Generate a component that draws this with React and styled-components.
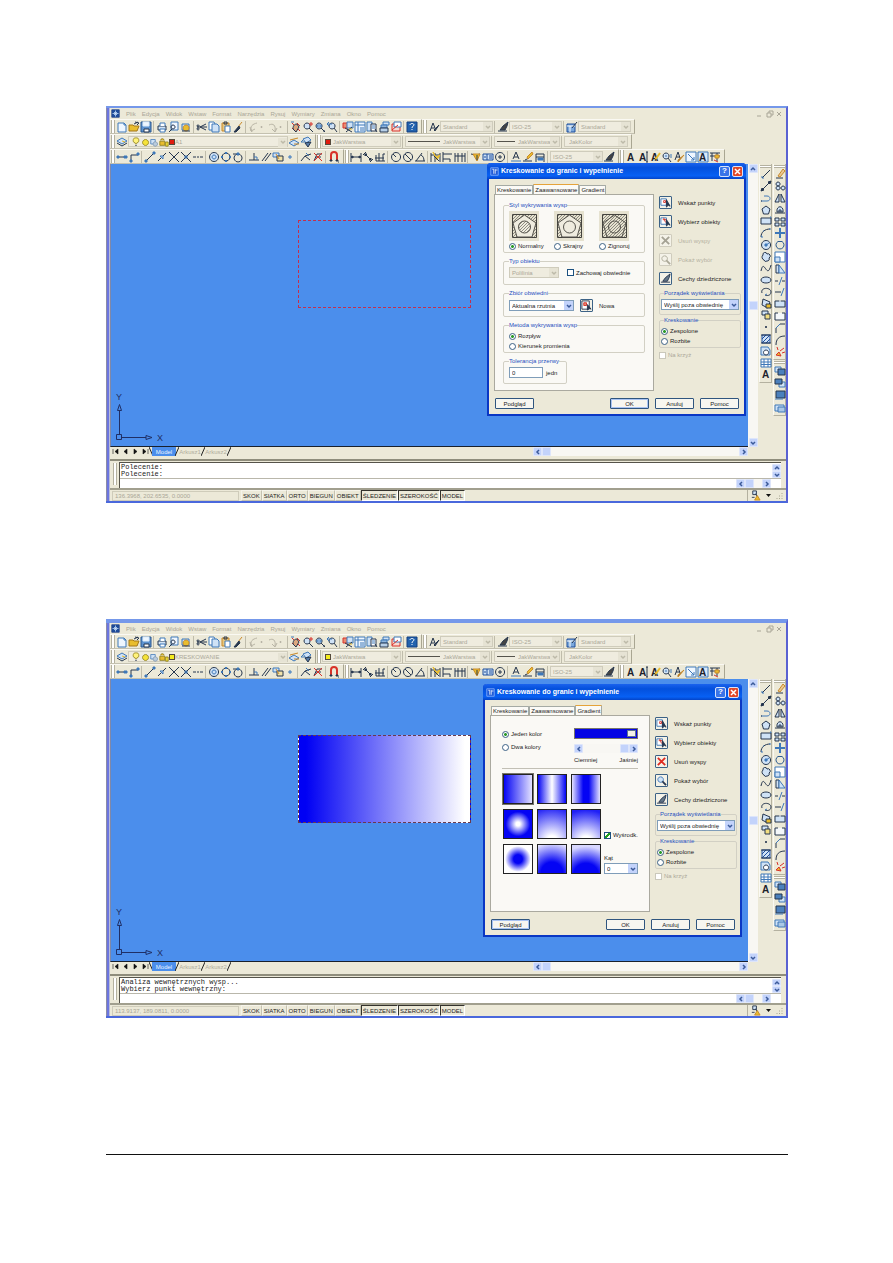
import { useId, useState } from "react";
import styled, { createGlobalStyle } from "styled-components";

const GlobalStyle = createGlobalStyle`
  * { box-sizing: border-box; }
  body { margin: 0; background: #fff; }
  body, button, input, select {
    font-family: "Liberation Sans", Arial, sans-serif;
    font-size: 6px;
    line-height: 8px;
    color: #1c1c1c;
  }
  button, input, select { margin: 0; padding: 0; border: 0; background: none; }
  svg { display: block; flex: none; }
`

/* ---------- icons ---------- */
const N = '#26364e'
const B = '#3f78b8'
const L = '#cfe2f6'
const Y = '#e9bd2e'
const R = '#d8322a'
const G = '#b9b5a6'
const O = '#c98a2b'

// every glyph is a list of [path, stroke, fill]; a string entry is a letter
const glyphs = {
  app: [['M1 1h10v10H1z', '#1d3f86', '#1f4e9c'], ['M6 2v8M2 6h8M4 4l4 4M8 4l-4 4', '#cfe6ff']],
  new: [['M2 2h6l2 2v7H2z', B, '#eef6ff'], ['M8 2v2h2', B]],
  open: [['M1 4h4l1 1h5l-2 5H1z', '#a5781a', Y], ['M6 3l4-2M7 1l4 1-2 2', N]],
  save: [['M1 1h10v10H1z', '#28568f', '#5d92cf'], ['M3 1h6v4H3z', '#dcebfa', '#eef6ff'], ['M4 8h5v3H4z', N, '#fff']],
  print: [['M2 5h8v4H2z', N, L], ['M4 5V2h5v3M4 8h5v3H4z', B, '#fff']],
  preview: [['M3 1h7v8H3z', B, '#eef6ff'], ['M5 4a2 2 0 1 0 .1 0M4 8l-3 3', N]],
  publish: [['M2 3h7v6H2z', B, L], ['M6 4a3 3 0 1 0 .1 0', O, Y], ['M2 10h8', N]],
  cut: [['M1 6h10M4 6l6-3M4 6l6 3', N], ['M2 4a1 1 0 1 0 .1 0M2 7a1 1 0 1 0 .1 0', N]],
  copy: [['M1 1h5l1 2v6H1z', B, '#fff'], ['M4 3h5l2 2v6H4z', B, L]],
  paste: [['M2 2h7v8H2z', O, '#e6c680'], ['M5 5h5v6H5z', B, '#fff'], ['M4 1h3v2H4z', N]],
  brush: [['M10 1L6 6', O], ['M7 5l-5 6 2 0 4-4z', N, N]],
  undo: [['M4 11C1 5 5 3 9 2M4 11C3 10 3 9 3 8', G], ['M2 6l1 4 4-2', G]],
  redo: [['M2 4c4-2 7 0 6 6', G], ['M5 8l3 3 2-4', G]],
  dot: [['M3 5.500h1v1h-1z', G, G]],
  pan: [['M2 2l8 8M7 2l3 3M2 7l3 3', R], ['M3 8c0-4 2-5 4-5l2 3-3 5z', N, '#dca77e'], ['M1 1h3', B]],
  zoom: [['M5 2a3 3 0 1 0 .1 0M7 7l4 4', N, L], ['M9 1v4M7 3h4', R]],
  zoomwin: [['M5 2a3 3 0 1 0 .1 0M7 7l4 4', N, L], ['M3 4h4v2H3z', B], ['M9 10h2', N]],
  zoomprev: [['M6 2a3 3 0 1 0 .1 0M8 7l3 4', N, L], ['M1 3h5M1 3l2-2M1 3l2 2', B]],
  props: [['M1 2h5v5H1z', R, '#e98b70'], ['M5 1h6v6H5z', B, L], ['M3 7l7 4M10 6l-6 5', N], ['M7 8h3', Y]],
  center: [['M1 1h10v10H1z', B, '#eef6ff'], ['M4 1v10M1 4h10M6 7h4M6 9h4', B]],
  palettes: [['M1 1h5v9H1z', B, L], ['M5 3h5v7H5z', N, '#fff'], ['M6 5h3M6 7h3', B], ['M9 8l2 3', N]],
  sheet: [['M5 1h6v3H5z', B, L], ['M3 4h6v3H3z', B, '#8fb4dc'], ['M2 7h8v4H2z', N, '#b7cfe8']],
  markup: [['M2 3h8v7H2z', R, '#f7dad2'], ['M4 1h7v5H4z', B, '#fff'], ['M2 9l6-5', R]],
  help: [['M1 1h10v10H1z', '#123f80', '#2262ae'], ['M4 4c0-2 4-2 4 0 0 1-2 1-2 3M6 8v1', '#fff']],
  textstyle: [['M2 10l3-8 2 5M3 7h4', N], ['M11 4L6 9l1 1z', N, '#555']],
  dimstyle: [['M1 10h9', N], ['M11 1L6 5l-3 4 5 0 2-4z', N, '#444']],
  tablestyle: [['M1 3h8v8H1z', '#1f4e9c', '#7ba8dc'], ['M1 5h8M4 5v6', '#fff'], ['M11 1L6 7', N]],
  layers: [['M1 5l5-3 5 3-5 3z', B, L], ['M1 7l5 3 5-3', N], ['M6 5l3 1', Y]],
  bulb: [['M6 1a3 3 0 0 1 1 6v1H5V7a3 3 0 0 1 1-6', '#9b8b2a', '#fff37a'], ['M5 10h2', N]],
  sun: [['M6 2a4 4 0 1 0 .1 0', '#8b7b18', '#f5e23a']],
  freeze: [['M1 2h6v6H1z', B, L], ['M7 5a3 3 0 1 0 .1 0', '#7c94ae', '#b9cbdc']],
  lock: [['M2 4a2 2 0 1 1 4 0M1 5h6v5H1z', '#8b7b18', Y], ['M8 6h3v5H8z', '#8b7b18', '#f5e23a']],
  laymatch: [['M1 7l5-3 5 3-5 3z', B, L], ['M2 4l8-2M6 8h5', O]],
  layprev: [['M3 3l5-2 3 3-5 3z', B, L], ['M5 7l6-1-3 5z', N, '#567ba8'], ['M1 6h4M1 6l2-2', B]],
  track: [['M1 6h9', N], ['M1 5h2v2H1zM8 5h3v2H8z', B, B]],
  from: [['M3 11V4h7', N], ['M2 9h2v2H2zM9 2h2v2H9z', B, B]],
  endpoint: [['M2 10l8-8', N], ['M1 9h2v2H1zM9 1h2v2H9z', B, B]],
  midpoint: [['M2 10l8-8', N], ['M4 5h3v3z', B, L]],
  intersect: [['M1 1l10 10M11 1L1 11', N]],
  appint: [['M1 1l10 10M11 1L1 11', N], ['M5 5h2v2H5z', B]],
  ext: [['M1 6h3M5 6h2M8 6h3', N]],
  center2: [['M6 1.500a4.500 4.500 0 1 0 .1 0', N, L], ['M6 4a2 2 0 1 0 .1 0', B]],
  quadrant: [['M6 2a4 4 0 1 0 .1 0', N], ['M6 1l1 1-1 1-1-1zM6 9l1 1-1 1-1-1zM2 5l1 1-1 1-1-1zM10 5l1 1-1 1-1-1z', B, B]],
  tangent: [['M6 3a4 4 0 1 0 .1 0', N], ['M1 3h5', N], ['M5 2h2v2H5z', B, B]],
  perp: [['M6 2v7M1 9h10', N], ['M6 6h3v3', B]],
  parallel: [['M2 10l6-8M5 10l6-8', N]],
  insert: [['M1 2h6v4H1z', B, L], ['M5 5h6v5H5z', N, '#f2e3a8'], ['M4 3l3 5', O]],
  node: [['M5 5h2v2H5z', B, L]],
  nearest: [['M1 10l4-5 6-2M5 5l5 4', N], ['M6 2l3 3', B]],
  none: [['M2 10l3-7 5 0M4 6h5', N], ['M2 2l8 8M10 2L2 10', R]],
  osnap: [['M3 9V4a3 3 0 0 1 6 0v5', R, null, 2], ['M2 9h2v1H2zM8 9h2v1H8z', N, N], ['M10 11h1', N]],
  dimlin: [['M1 2v9M11 2v9M1 6h10', N], ['M1 6l2-1v2zM11 6L9 5v2z', N, N]],
  dimali: [['M1 4l3-3M8 11l3-3M3 3l6 6', N], ['M3 3l0 2 2-2zM9 9l0-2-2 2z', N, N]],
  dimord: [['M2 10h9M2 10V4M5 10V2M9 10V3M9 3h2M1 7h9', N]],
  dimrad: [['M6 1.500a4.500 4.500 0 1 0 .1 0', N], ['M6 6L3 3', N]],
  dimdia: [['M6 1.500a4.500 4.500 0 1 0 .1 0M3 3l6 6', N]],
  dimang: [['M1 10h10M2 10l6-8M7 4c2 1 3 3 3 6', N]],
  qdim: [['M1 2v9M5 2v9M10 2v9M1 4h9', N], ['M3 1l3 5 4-2-3 5z', Y, Y], ['M4 5l5 5', N]],
  dimbase: [['M1 1v10M1 3h9M1 8h7M8 8v3', N]],
  dimcont: [['M1 2v9M4 2v9M8 2v9M11 2v9M1 5h10', N]],
  leader: [['M1 3l5 1 4-1', N], ['M3 3l4 7 3-7z', O, Y], ['M7 4v5', N]],
  tol: [['M1 3h10v6H1z', '#1f4e9c', L], ['M5 3v6M7 5h3M3 5v2M7 7h3', '#1f4e9c']],
  cmark: [['M6 1.500a4.500 4.500 0 1 0 .1 0', N], ['M6 4v4M4 6h4', N]],
  dimedit: [['M1 10h10', B], ['M3 8l3-7 3 7M4 6h4', N]],
  dimtedit: [['M1 10h9M3 9l4-2', N], ['M10 1L5 6l1 2 5-5z', O, Y]],
  dimupd: [['M2 3v8M10 3v8M2 6h8M2 3h8', N], ['M4 7h5v2H4z', B, B]],
  mtext: ['A'],
  dtext: ['A', ['M10 1v10M9 1h2M9 11h2', N]],
  tedit: ['A', ['M11 2L6 9', Y, null, 2], ['M6 10l1-2', N]],
  find: [['M5 2a3 3 0 1 0 .1 0M7 7l3 4', N, L], ['M4 5h2M9 4h2M9 6h2', B]],
  tstyle: [['M2 9l3-8 2 6M3 6h4', N], ['M11 4L5 9l0 2z', O, '#8a6534']],
  tscale: [['M1 1h10v10H1z', B, '#eef6ff'], ['M3 3l6 6M9 6v3H6', B]],
  tjust: [['M1 1h10v10H1z', B, '#dbe9f8'], 'A'],
  tspace: [['M1 2h10M1 5h10M3 2v8M8 2v8', N], ['M6 4h4v3H6z', O, Y], ['M5 9l4 2', R]],
  line: [['M2 10l8-8', N], ['M1 9h2v2', B]],
  xline: [['M1 11L11 1', N], ['M1 11l3-1-2-2zM11 1L8 2l2 2z', N, N]],
  pline: [['M1 9h6c4 0 4-5 0-5H4', B], ['M1 9h1', N]],
  polygon: [['M6 2l4 3-1.500 5h-5L2 5z', N, L]],
  rect: [['M1 3h10v6H1z', N, L], ['M10 2h1v1', B]],
  arc: [['M1 10c0-5 4-8 9-8', N], ['M1 9h1v2M3 4h1M9 2h2', B]],
  circle: [['M6 1.500a4.500 4.500 0 1 0 .1 0', N, L], ['M6 6l3-2', B], ['M5 5h2v2H5z', B, B]],
  cloud: [['M3 4a2 2 0 0 1 4-1 2 2 0 0 1 2 4 2 2 0 0 1-2 3 2 2 0 0 1-3-1 3 3 0 0 1-1-5', N, L]],
  spline: [['M1 9c3-14 6 10 10-6', N]],
  ellipse: [['M1 6c0-4 10-4 10 0s-10 4-10 0', N, L]],
  earc: [['M2 7c-2-6 9-6 9-1 0 4-5 4-6 3', N], ['M5 9l2-1', B]],
  block: [['M3 1l7 3-2 6-6-3z', N, L], ['M6 6h5v4H6z', N, Y]],
  mkblock: [['M2 2h6v4H2z', N, L], ['M5 5h5v5H5z', N, '#f2de81']],
  point: [['M5.500 5.500h1v1h-1z', N, N]],
  hatch: [['M2 2h8v8H2zM2 6l4-4M2 10l8-8M6 10l4-4', '#1f4e9c', L], ['M1 2h10M1 10h10', N]],
  region: [['M1 2h7l2 3v5H1z', B, L], ['M6 5a2.500 2.500 0 1 0 .1 0', N, '#fff']],
  table: [['M1 2h10v8H1z', B, '#fff'], ['M1 5h10M1 7.500h10M4 2v8M8 2v8', B]],
  erase: [['M2 10h7', N], ['M4 8l5-7 2 2-5 6z', O, '#eac793']],
  copyobj: [['M4 2a2 2 0 1 0 .1 0M4 6a2 2 0 1 0 .1 0M9 6a2 2 0 1 0 .1 0', N, L]],
  mirror: [['M5 2v8H1zM7 2v8h4z', N, L]],
  offset: [['M1 9h10M3 8c-1-7 7-7 6 0z', N, L], ['M5 8V6h2v2', N]],
  array: [['M1 2h4v3H1zM7 2h4v3H7zM1 7h4v3H1zM7 7h4v3H7z', N, L]],
  move: [['M6 1v10M1 6h10', B, null, 2], ['M6 1l1 1H5zM6 11l1-1H5zM1 6l1 1V5zM11 6l-1 1V5z', B, B]],
  rotate: [['M4 2.500a4 4 0 1 0 4 0M4 2.500l4 0', '#2c5a8e']],
  scale: [['M1 1h10v10H1z', B, '#fff'], ['M1 6h5v5H1z', B, L]],
  stretch: [['M2 2h3v8H2z', N, L], ['M5 2l6 8H5z', B, L]],
  trim: [['M1 6h3M8 6h3', N], ['M8 2L5 10', B]],
  extend: [['M1 6h6', N], ['M10 2L7 10', B]],
  break1: [['M1 3h10v6H1z', N, L], ['M5 3h2', '#fff']],
  break2: [['M4 3H1v7h10V3H8', N, '#f4f7fa']],
  chamfer: [['M2 11V6l4-4h5', N], ['M2 6l4-4', B]],
  fillet: [['M2 11C2 5 5 2 11 2', N]],
  explode: [['M2 9l3-3 2 4z', R, Y], ['M6 5l4-3M8 7l3-1M4 4L3 1', R]],
  front: [['M1 2h6v5H1z', B, L], ['M4 4h7v6H4z', N, '#4b80bc']],
  back: [['M5 5h6v5H5z', B, L], ['M1 2h7v5H1z', N, '#4b80bc']],
  above: [['M2 2h9v7H2z', N, '#4b80bc'], ['M1 10h8', B]],
  under: [['M1 3h9v6H1z', B, L], ['M4 5h7v5H4z', B, '#a9c7e6']],
  pick: [['M1 2h6v7H1z', B, '#fff'], ['M4 4h2v2H4z', R], ['M7 3v8l2-2 2 1z', N, N]],
  pickobj: [['M1 2h6v7H1z', B, '#fff'], ['M4 2l2 5M3 4h4', R], ['M7 4v7l2-2 2 1z', N, N]],
  remove: [['M2 2l8 8M10 2l-8 8', '#e02b20', null, 2]],
  removeoff: [['M2 2l8 8M10 2l-8 8', '#a5a294', null, 2]],
  view: [['M5 2a3 3 0 1 0 .1 0', B, L], ['M7 7l4 4', N, null, 2]],
  viewoff: [['M5 2a3 3 0 1 0 .1 0', '#aba897'], ['M7 7l4 4', '#aba897', null, 2]],
  inherit: [['M1 10h10', N], ['M11 1L6 5 3 9l5 0 2-4z', N, '#66788a']],
  newset: [['M1 1h8v9H1z', N, '#fff'], ['M3 3h3v3H3z', R, '#e98b70'], ['M7 5v6l2-2 2 1z', N, N]],
  dialog: [['M1 1h10v10H1z', '#8fb7ff', '#1f5bd8'], ['M3 3h2v6M7 3v6M7 4h3', '#fff']],
  tray: [['M3 1h4v4H3zM6 4l3 5', N, L], ['M2 8h3', N], ['M8 6l3 5H5z', O, Y]]
}

function Icon({ name, size = 12 }) {
  return (
    <svg width={size} height={size} viewBox="0 0 12 12" aria-hidden="true">
      {glyphs[name].map((g, i) => typeof g === 'string'
        ? <text key={i} x="2" y="10" fontSize="10" fontWeight="700" fill="#1c222c">{g}</text>
        : <path key={i} d={g[0]} stroke={g[1]} fill={g[2] || 'none'} strokeWidth={g[3] || 1} />)}
    </svg>
  )
}

/* ---------- page and application window ---------- */
const Page = styled.main`
  padding: 106px 105px 60px 106px;
`
const AppWindow = styled.section`
  padding-left: 4px;
  margin-bottom: ${p => p.$after}px;
  border-top: ${p => p.$cap}px solid #7598ea;
  border-right: 2px solid #5a62d2;
  border-bottom: 2px solid #4a68dc;
  background: linear-gradient(to right, #8c8ca6 1px, #6c76e0 1px 3px, #b9bcd6 3px 4px, #ece9d8 4px);
`
const MenuBar = styled.nav`
  display: flex;
  align-items: center;
  gap: 6px;
  height: 11px;
  padding: 0 3px 0 1px;
`
const MenuItem = styled.button`
  color: #a9a697;
`
const Spacer = styled.div`
  flex: 1;
`
const ToolRow = styled.div`
  display: flex;
  height: 15px;
`
const Toolbar = styled.div`
  display: flex;
  align-items: center;
  height: 15px;
  padding-right: 3px;
  border-right: 1px solid #a9a692;
  border-bottom: 1px solid #c4c1b0;
  border-top: 1px solid #faf9f3;
`
const Grip = styled.div`
  width: 4px;
  height: 13px;
  margin: 0 1px;
  border-left: 1px solid #b4b1a0;
  border-right: 1px solid #b4b1a0;
  background: #fff;
`
const ToolButton = styled.button`
  display: flex;
  align-items: center;
  justify-content: center;
  width: ${p => p.$narrow ? 7 : 12}px;
  height: 12px;
  overflow: hidden;
`
const Separator = styled.div`
  width: 1px;
  height: 12px;
  margin: 0 2px 0 1px;
  background: #bfbcab;
`

function Tools({ names }) {
  return names.split(' ').map((n, i) => n === '|'
    ? <Separator key={i} />
    : <ToolButton key={i} $narrow={n === 'dot'} aria-label={n}><Icon name={n} /></ToolButton>)
}

/* ---------- drop-down ---------- */
const SelectBox = styled.div`
  display: grid;
  align-items: center;
  flex: none;
  width: ${p => p.$width ? p.$width + 'px' : '100%'};
  height: 11px;
  border: 1px solid ${p => p.$off ? '#cfccbc' : '#7f9db9'};
  background: ${p => p.$off ? '#efecdf' : '#fff'};
  > * { grid-area: 1 / 1; }
`
const NativeSelect = styled.select`
  appearance: none;
  width: 100%;
  height: 9px;
  padding-left: ${p => p.$indent}px;
  color: ${p => p.$off ? '#aba899' : '#1c1c1c'};
  opacity: 1;
`
const Arrow = styled.span`
  justify-self: end;
  display: flex;
  align-items: center;
  justify-content: center;
  width: 9px;
  height: 9px;
  pointer-events: none;
  background: ${p => p.$off ? '#e6e3d4' : '#c3d3fb'};
`
const Lead = styled.span`
  display: flex;
  align-items: center;
  padding-left: 2px;
  pointer-events: none;
`
const ColorChip = styled.span`
  width: 6px;
  height: 6px;
  border: 1px solid #554a3c;
  background: ${p => p.$color};
`
const Stroke = styled.span`
  width: ${p => p.$width}px;
  height: 1px;
  background: #55534c;
`

function Chevron({ dir = 'down', color = '#3b5a9a' }) {
  const d = { down: 'M1 2l2 2 2-2', up: 'M1 4l2-2 2 2', left: 'M4 1L2 3l2 2', right: 'M2 1l2 2-2 2' }[dir]
  return <svg width="6" height="6" viewBox="0 0 6 6" aria-hidden="true"><path d={d} stroke={color} strokeWidth="1.500" fill="none" /></svg>
}

function Combo({ label, value, width, off, indent = 2, children }) {
  return (
    <SelectBox $width={width} $off={off}>
      <NativeSelect aria-label={label} disabled={off} $off={off} $indent={indent}>
        <option>{value}</option>
      </NativeSelect>
      {children && <Lead>{children}</Lead>}
      <Arrow $off={off}><Chevron color={off ? '#bdbaa9' : undefined} /></Arrow>
    </SelectBox>
  )
}

/* ---------- drawing area ---------- */
const Workspace = styled.div`
  display: flex;
  gap: 1px;
  position: relative;
`
const DrawColumn = styled.div`
  flex: 1;
  min-width: 0;
`
const DrawRow = styled.div`
  display: flex;
  height: 283px;
`
const Canvas = styled.div`
  flex: 1;
  position: relative;
  background: #4b8eec;
  border-left: 1px solid #8088a8;
  border-bottom: 1px solid #18202c;
`
const Shape = styled.div`
  position: absolute;
  left: 187px;
  top: 56px;
  width: 173px;
  height: 88px;
  border: 1px dashed ${p => p.$filled ? '#6a3a4c' : '#c2304e'};
  background: ${p => p.$filled ? 'linear-gradient(to right, #0000f4 4%, #fff 97%)' : 'none'};
`
const Ucs = styled.svg`
  position: absolute;
  left: 3px;
  bottom: 0;
`
const VScroll = styled.div`
  display: flex;
  flex-direction: column;
  justify-content: space-between;
  align-items: center;
  width: 10px;
  background: #f8f7f3;
`
const HScroll = styled.div`
  display: flex;
  justify-content: space-between;
  align-items: center;
  width: ${p => p.$width ? p.$width + 'px' : 'auto'};
  height: 9px;
  margin-right: ${p => p.$inset || 0}px;
  background: #f8f7f3;
`
const ScrollPair = styled.div`
  display: flex;
`
const ScrollButton = styled.button`
  display: flex;
  align-items: center;
  justify-content: center;
  width: 9px;
  height: ${p => p.$short ? 7 : 9}px;
  border: 1px solid #dde5fb;
  border-radius: 1px;
  background: #c3d3fb;
`
const LayoutRow = styled.div`
  display: flex;
  justify-content: space-between;
  height: 10px;
`
const LayoutTabs = styled.div`
  display: flex;
  align-items: center;
  height: 9px;
`
const NavButton = styled.button`
  width: 10px;
  height: 9px;
  display: flex;
  align-items: center;
  justify-content: center;
`
const Slash = styled.svg`
  margin: 0 -1px;
`
const LayoutTab = styled.button`
  width: 24px;
  height: 9px;
  color: ${p => p.$active ? '#e8f2ff' : '#b0ad9d'};
  background: ${p => p.$active ? '#4b8eec' : 'transparent'};
`
const SideBar = styled.div`
  width: 13px;
`
const SideTools = styled.div`
  display: flex;
  flex-direction: column;
  justify-content: space-between;
  align-items: center;
  height: ${p => p.$height}px;
  padding: 1px 0 2px;
  border-right: 1px solid #b4b1a0;
  border-bottom: 1px solid #b4b1a0;
  border-left: 1px solid #faf9f3;
`
const SideGrip = styled.div`
  width: 11px;
  height: 3px;
  border-top: 1px solid #b4b1a0;
  border-bottom: 1px solid #b4b1a0;
  background: #fff;
`
const SideButton = styled.button`
  display: flex;
  justify-content: center;
  align-items: center;
  width: 11px;
  height: 11px;
`

function Side({ names, height }) {
  return (
    <SideTools $height={height}>
      <SideGrip />
      {names.split(' ').map(n => <SideButton key={n} aria-label={n}><Icon name={n} /></SideButton>)}
    </SideTools>
  )
}

/* ---------- command line and status ---------- */
const CommandPanel = styled.div`
  display: flex;
  margin-top: 2px;
  padding: 1px 5px 0 2px;
  border-top: 2px solid #8f8d7c;
`
const CommandGrip = styled(Grip)`
  height: 22px;
  margin: 1px 2px 0 1px;
`
const CommandBox = styled.div`
  flex: 1;
  height: 26px;
  border-top: 1px solid #55534a;
  border-left: 1px solid #55534a;
  background: #fff;
`
const History = styled.div`
  display: flex;
  justify-content: space-between;
  height: 16px;
  padding: 1px 0 0 1px;
  border-bottom: 1px solid #b9b7ab;
`
const HistoryText = styled.pre`
  margin: 0;
  font: 7px/7px "Liberation Mono", monospace;
  color: #222;
`
const Prompt = styled.div`
  display: flex;
  height: 9px;
`
const PromptInput = styled.input`
  flex: 1;
  min-width: 0;
  height: 9px;
  outline: 0;
`
const StatusBar = styled.footer`
  display: flex;
  align-items: center;
  height: 13px;
  padding: 0 2px;
  border-top: 2px solid #a19f8e;
`
const Coords = styled.div`
  width: 127px;
  height: 10px;
  margin-right: 2px;
  padding: 0 2px;
  border: 1px solid #cfccba;
  color: #a9a697;
`
const StatusButton = styled.button`
  height: 11px;
  padding: 0 1px;
  border-style: solid;
  border-width: 1px;
  border-color: ${p => p.$on ? '#33322c #fff #fff #33322c' : '#f6f4ea #c5c2b0 #c5c2b0 #f6f4ea'};
`
const Tray = styled.div`
  display: flex;
  align-items: center;
  gap: 5px;
  padding-left: 2px;
  border-left: 1px solid #b4b1a0;
`

/* ---------- dialog ---------- */
const Dialog = styled.div`
  position: absolute;
  top: ${p => p.$top}px;
  right: ${p => p.$right}px;
  width: 259px;
  border: 2px solid #0a37c4;
  border-top: 0;
  border-radius: 4px 4px 0 0;
  background: #ece9d8;
`
const TitleBar = styled.header`
  display: flex;
  align-items: center;
  gap: 2px;
  height: 16px;
  margin: 0 -2px;
  padding: 0 3px;
  border-radius: 4px 4px 0 0;
  background: linear-gradient(#1a62ee, #0450dc 30%, #0760f4 80%, #0444c8);
`
const Title = styled.h2`
  flex: 1;
  margin: 0;
  font-size: 7px;
  line-height: 10px;
  color: #fff;
`
const CaptionButton = styled.button`
  width: 11px;
  height: 11px;
  border: 1px solid #d6e2fb;
  border-radius: 2px;
  color: #fff;
  font-size: 8px;
  font-weight: 700;
  background: ${p => p.$close ? '#e0492a' : '#3a74e8'};
  display: flex;
  align-items: center;
  justify-content: center;
`
const DialogBody = styled.div`
  display: flex;
  gap: 5px;
  padding: 5px 3px 0 5px;
`
const Tabs = styled.div`
  display: flex;
  align-items: flex-end;
  height: 10px;
  padding-left: 1px;
`
const Tab = styled.button`
  height: ${p => p.$active ? 10 : 9}px;
  padding: 0 1px;
  border: 1px solid #a5aaa4;
  border-bottom: 0;
  border-top-color: ${p => p.$active ? '#e5a33a' : '#a5aaa4'};
  border-radius: 1px 1px 0 0;
  background: #fbfaf6;
  white-space: nowrap;
`
const Panel = styled.div`
  width: 160px;
  height: 197px;
  padding: ${p => p.$roomy ? '12px 11px' : '6px 8px'};
  border: 1px solid #aaa99f;
  background: #faf9f5;
  display: flex;
  flex-direction: column;
  gap: ${p => p.$roomy ? 5 : 4}px;
`
const Group = styled.fieldset`
  min-width: 0;
  width: ${p => p.$narrow ? '64px' : 'auto'};
  height: ${p => p.$height}px;
  margin: 0;
  padding: ${p => p.$tight ? '2px 1px 0' : '2px 5px 0'};
  border: 1px solid #d2d0c4;
  border-radius: 2px;
`
const Legend = styled.legend`
  margin-left: ${p => p.$inset || 0}px;
  padding: 0;
  line-height: 8px;
  color: #1d4fbf;
  white-space: nowrap;
`
const Line = styled.div`
  display: flex;
  align-items: center;
  gap: ${p => p.$gap || 0}px;
`
const Styles = styled.div`
  display: grid;
  grid-template-columns: repeat(3, 45px);
`
const Check = styled.label`
  display: flex;
  align-items: center;
  gap: 2px;
  height: 10px;
  white-space: nowrap;
  color: ${p => p.$off ? '#aba899' : 'inherit'};
`
const Radio = styled.input.attrs({ type: 'radio' })`
  appearance: none;
  flex: none;
  width: 7px;
  height: 7px;
  border: 1px solid #3c6286;
  border-radius: 50%;
  background: #fff;
  &:checked { background: radial-gradient(#2a9a2a 30%, #fff 50%); }
`
const Tick = styled.input.attrs({ type: 'checkbox' })`
  appearance: none;
  flex: none;
  width: 7px;
  height: 7px;
  border: 1px solid #1c5180;
  background: #fff;
  &:disabled { border-color: #cac8bb; }
  &:checked { background: linear-gradient(135deg, #fff 35%, #21a121 35% 65%, #fff 65%); }
`
const SmallInput = styled.input`
  width: 34px;
  height: 11px;
  padding-left: 2px;
  border: 1px solid #7f9db9;
  background: #fff;
`
const SideColumn = styled.div`
  flex: 1;
  min-width: 0;
  padding-top: 12px;
`
const Actions = styled.div`
  display: flex;
  flex-direction: column;
  gap: 6px;
  margin-bottom: 4px;
`
const Action = styled.button`
  display: flex;
  align-items: center;
  gap: 6px;
  height: 13px;
  color: ${p => p.$off ? '#b5b2a2' : '#1c1c1c'};
`
const IconFrame = styled.span`
  display: flex;
  align-items: center;
  justify-content: center;
  width: 13px;
  height: 13px;
  border: 1px solid ${p => p.$off ? '#cfccbd' : '#3c6286'};
  border-radius: 1px;
  background: #f4f2e8;
`
const SideGroups = styled.div`
  display: flex;
  flex-direction: column;
  gap: 1px;
`
const Footer = styled.div`
  display: flex;
  gap: 6px;
  padding: 7px 5px 5px 6px;
`
const PushButton = styled.button`
  width: 39px;
  height: 11px;
  border: 1px solid #2f557f;
  border-radius: 1px;
  background: #f7f6f0;
  box-shadow: ${p => p.$default ? 'inset 0 0 0 1px #a9c3f2' : 'none'};
`

function Preview({ kind }) {
  const id = useId()
  const hatch = `url(#${id})`
  return (
    <svg width="30" height="30" viewBox="0 0 30 30" aria-hidden="true">
      <defs>
        <pattern id={id} width="3" height="3" patternUnits="userSpaceOnUse">
          <path d="M0 3L3 0M-1 1L1 -1M2 4L4 2" stroke="#66645c" strokeWidth=".7" />
        </pattern>
      </defs>
      <path d="M0 0h30v30H0z" fill="#e6e2d0" />
      <path d="M3.500 3.500h24v23h-24z" fill={hatch} stroke="#44433e" />
      <path d="M15.500 4L27 12l-4 14H8L4 12z" fill={kind === 'ignore' ? 'none' : '#efecdf'} stroke="#55534c" />
      <circle cx="15.500" cy="16" r="6" fill={kind === 'normal' ? hatch : 'none'} stroke="#55534c" />
    </svg>
  )
}

function AdvancedPanel() {
  const [style, setStyle] = useState('Normalny')
  const [method, setMethod] = useState('Rozpływ')
  return (
    <Panel>
      <Group $height={52}>
        <Legend>Styl wykrywania wysp</Legend>
        <Styles>
          {[['Normalny', 'normal'], ['Skrajny', 'outer'], ['Zignoruj', 'ignore']].map(([name, kind]) => (
            <div key={name}>
              <Preview kind={kind} />
              <Check><Radio name="island" checked={style === name} onChange={() => setStyle(name)} />{name}</Check>
            </div>
          ))}
        </Styles>
      </Group>
      <Group $height={28}>
        <Legend>Typ obiektu</Legend>
        <Line $gap={8}>
          <Combo label="Typ obiektu" value="Polilinia" width={50} off />
          <Check><Tick />Zachowaj obwiednie</Check>
        </Line>
      </Group>
      <Group $height={28}>
        <Legend>Zbiór obwiedni</Legend>
        <Line $gap={6}>
          <Combo label="Zbiór obwiedni" value="Aktualna rzutnia" width={65} />
          <Action><IconFrame><Icon name="newset" size={11} /></IconFrame>Nowa</Action>
        </Line>
      </Group>
      <Group $height={32}>
        <Legend>Metoda wykrywania wysp</Legend>
        {['Rozpływ', 'Kierunek promienia'].map(name => (
          <Check key={name}><Radio name="method" checked={method === name} onChange={() => setMethod(name)} />{name}</Check>
        ))}
      </Group>
      <Group $height={27} $narrow>
        <Legend>Tolerancja przerwy</Legend>
        <Line $gap={3}><SmallInput aria-label="Tolerancja przerwy" defaultValue="0" />jedn</Line>
      </Group>
    </Panel>
  )
}

const GradientTop = styled.div`
  display: grid;
  grid-template-columns: 72px 1fr;
  height: 41px;
  border-bottom: 1px solid #c2c0b5;
`
const ColorChoice = styled.div`
  display: flex;
  flex-direction: column;
  gap: 3px;
  padding-top: 1px;
`
const ColorBar = styled.div`
  display: flex;
  height: 11px;
  margin-bottom: 5px;
  padding: 1px;
  border: 1px solid #77756a;
  background: #0404e4;
`
const MoreButton = styled.button`
  width: 9px;
  margin-left: auto;
  border: 1px solid #5c7390;
  background: #f4f2e8;
`
const Ends = styled.div`
  display: flex;
  justify-content: space-between;
  margin-top: 3px;
`
const GradientBottom = styled.div`
  display: flex;
  gap: 3px;
`
const Swatches = styled.div`
  display: grid;
  grid-template-columns: repeat(3, 30px);
  gap: 5px 4px;
  padding-left: 1px;
`
const Swatch = styled.button`
  height: 30px;
  border: 1px solid #222;
  background: ${p => p.$fill};
  box-shadow: ${p => p.$on ? '0 0 0 1px #77756a' : 'none'};
`
const Options = styled.div`
  display: flex;
  flex-direction: column;
  justify-content: flex-end;
  width: 34px;
`
const AngleLabel = styled.span`
  margin: 14px 0 1px;
`
const fills = [
  'linear-gradient(to right, #0404f4, #e4e2ff)',
  'linear-gradient(to right, #0404f4, #fff 50%, #0404f4)',
  'linear-gradient(to right, #e4e2ff, #0404f4 40% 60%, #e4e2ff)',
  'radial-gradient(circle, #fff 10%, #0404f4 62%)',
  'radial-gradient(circle at 50% 110%, #fff 15%, #0404f4 110%)',
  'radial-gradient(ellipse 120% 110% at 50% 110%, #fff 15%, #2020f6)',
  'radial-gradient(circle, #0404f4 22%, #fff 65%)',
  'radial-gradient(circle at 50% 100%, #0404f4 35%, #eeeeff 100%)',
  'radial-gradient(ellipse 110% 100% at 50% 105%, #0404f4 40%, #d8d8ff)'
]

function GradientPanel() {
  const [mode, setMode] = useState('Jeden kolor')
  return (
    <Panel $roomy>
      <GradientTop>
        <ColorChoice>
          {['Jeden kolor', 'Dwa kolory'].map(name => (
            <Check key={name}><Radio name="colors" checked={mode === name} onChange={() => setMode(name)} />{name}</Check>
          ))}
        </ColorChoice>
        <div>
          <ColorBar><MoreButton aria-label="Wybierz kolor" /></ColorBar>
          <HScroll>
            <ScrollButton aria-label="Ciemniej"><Chevron dir="left" /></ScrollButton>
            <ScrollPair>
              <ScrollButton aria-label="Odcień" />
              <ScrollButton aria-label="Jaśniej"><Chevron dir="right" /></ScrollButton>
            </ScrollPair>
          </HScroll>
          <Ends><span>Ciemniej</span><span>Jaśniej</span></Ends>
        </div>
      </GradientTop>
      <GradientBottom>
        <Swatches>
          {fills.map((f, i) => <Swatch key={f} $fill={f} $on={i === 0} aria-label={`Gradient ${i + 1}`} />)}
        </Swatches>
        <Options>
          <Check><Tick defaultChecked />Wyśrodk.</Check>
          <AngleLabel>Kąt</AngleLabel>
          <Combo label="Kąt" value="0" />
        </Options>
      </GradientBottom>
    </Panel>
  )
}

function HatchDialog({ active, top, right }) {
  const off = active === 'Zaawansowane'
  const [kind, setKind] = useState('Zespolone')
  const actions = [
    ['Wskaż punkty', 'pick'],
    ['Wybierz obiekty', 'pickobj'],
    ['Usuń wyspy', off ? 'removeoff' : 'remove', off],
    ['Pokaż wybór', off ? 'viewoff' : 'view', off],
    ['Cechy dziedziczone', 'inherit']
  ]
  return (
    <Dialog role="dialog" aria-label="Kreskowanie" $top={top} $right={right}>
      <TitleBar>
        <Icon name="dialog" size={9} />
        <Title>Kreskowanie do granic i wypełnienie</Title>
        <CaptionButton aria-label="Pomoc">?</CaptionButton>
        <CaptionButton $close aria-label="Zamknij">
          <svg width="7" height="7" viewBox="0 0 7 7"><path d="M1 1l5 5M6 1L1 6" stroke="#fff" strokeWidth="1.500" /></svg>
        </CaptionButton>
      </TitleBar>
      <DialogBody>
        <div>
          <Tabs role="tablist">
            {['Kreskowanie', 'Zaawansowane', 'Gradient'].map(t => (
              <Tab key={t} role="tab" aria-selected={t === active} $active={t === active}>{t}</Tab>
            ))}
          </Tabs>
          {off ? <AdvancedPanel /> : <GradientPanel />}
        </div>
        <SideColumn>
          <Actions>
            {actions.map(([text, icon, disabled]) => (
              <Action key={text} disabled={disabled} $off={disabled}>
                <IconFrame $off={disabled}><Icon name={icon} size={11} /></IconFrame>{text}
              </Action>
            ))}
          </Actions>
          <SideGroups>
            <Group $height={26} $tight>
              <Legend $inset={3}>Porządek wyświetlania</Legend>
              <Combo label="Porządek wyświetlania" value="Wyślij poza obwiednię" />
            </Group>
            <Group $height={32} $tight>
              <Legend $inset={3}>Kreskowanie</Legend>
              {['Zespolone', 'Rozbite'].map(name => (
                <Check key={name}><Radio name={'kind' + active} checked={kind === name} onChange={() => setKind(name)} />{name}</Check>
              ))}
            </Group>
            <span />
            <Check $off><Tick disabled />Na krzyż</Check>
          </SideGroups>
        </SideColumn>
      </DialogBody>
      <Footer>
        <PushButton $default={!off}>Podgląd</PushButton>
        <Spacer />
        <PushButton $default={off}>OK</PushButton>
        <PushButton>Anuluj</PushButton>
        <PushButton>Pomoc</PushButton>
      </Footer>
    </Dialog>
  )
}

const menus = ['Plik', 'Edycja', 'Widok', 'Wstaw', 'Format', 'Narzędzia', 'Rysuj', 'Wymiary', 'Zmiana', 'Okno', 'Pomoc']
const navs = [['Pierwsza', 'M1 1v5M6 1L3 3.500 6 6z'], ['Poprzednia', 'M5 1L2 3.500 5 6z'], ['Następna', 'M2 1l3 2.500L2 6z'], ['Ostatnia', 'M1 1l3 2.500L1 6zM6 1v5']]
const toggles = ['SKOK', 'SIATKA', 'ORTO', 'BIEGUN', 'OBIEKT', 'ŚLEDZENIE', 'SZEROKOŚĆ', 'MODEL']

function CadWindow({ cap, after, layer, color, coords, history, filled, children }) {
  return (
    <AppWindow $cap={cap} $after={after}>
      <MenuBar>
        <Icon name="app" size={9} />
        {menus.map(m => <MenuItem key={m}>{m}</MenuItem>)}
        <Spacer />
        <svg width="27" height="8" viewBox="0 0 27 8" aria-hidden="true">
          <path d="M1 6h4M11 3h4v4h-4zM13 3V1h4v4h-2M21 2l4 4M25 2l-4 4" stroke="#a9a697" fill="none" />
        </svg>
      </MenuBar>
      <ToolRow>
        <Toolbar>
          <Grip />
          <Tools names="new open save | print preview publish | cut copy paste brush | undo dot redo dot | pan zoom zoomwin zoomprev | props center palettes sheet markup | help" />
        </Toolbar>
        <Toolbar>
          <Grip />
          <Tools names="textstyle" />
          <Combo label="Styl tekstu" value="Standard" width={53} off />
          <Tools names="| dimstyle" />
          <Combo label="Styl wymiarowania" value="ISO-25" width={53} off />
          <Tools names="| tablestyle" />
          <Combo label="Styl tabeli" value="Standard" width={53} off />
        </Toolbar>
      </ToolRow>
      <ToolRow>
        <Toolbar>
          <Grip />
          <Tools names="layers" />
          <Combo label="Warstwa" value={layer} width={160} indent={46} off>
            <Icon name="bulb" size={10} /><Icon name="sun" size={9} /><Icon name="freeze" size={9} /><Icon name="lock" size={10} />
            <ColorChip $color={color} />
          </Combo>
          <Tools names="laymatch layprev" />
        </Toolbar>
        <Toolbar>
          <Grip />
          <Combo label="Kolor" value="JakWarstwa" width={79} indent={10} off><ColorChip $color={color} /></Combo>
          <Tools names="|" />
          <Combo label="Rodzaj linii" value="JakWarstwa" width={85} indent={37} off><Stroke $width={32} /></Combo>
          <Tools names="|" />
          <Combo label="Grubość linii" value="JakWarstwa" width={66} indent={23} off><Stroke $width={18} /></Combo>
          <Tools names="|" />
          <Combo label="Styl wydruku" value="JakKolor" width={64} indent={4} off />
        </Toolbar>
      </ToolRow>
      <ToolRow>
        <Toolbar>
          <Grip />
          <Tools names="track from | endpoint midpoint intersect appint ext | center2 quadrant tangent | perp parallel insert node | nearest none | osnap" />
        </Toolbar>
        <Toolbar>
          <Grip />
          <Tools names="dimlin dimali dimord | dimrad dimdia dimang | qdim dimbase dimcont | leader tol cmark | dimedit dimtedit dimupd |" />
          <Combo label="Wymiar" value="ISO-25" width={53} off />
          <Tools names="dimstyle" />
        </Toolbar>
        <Toolbar>
          <Grip />
          <Tools names="mtext dtext tedit find tstyle tscale tjust tspace" />
        </Toolbar>
      </ToolRow>

      <Workspace>
        <DrawColumn>
          <DrawRow>
            <Canvas>
              <Shape $filled={filled} />
              <Ucs width="54" height="56" viewBox="0 0 54 56">
                <path d="M2.500 44.500h5v5h-5zM5.500 44.500V21M7.500 47.500H32M5.500 14.500l-2 6h4zM38 47.500l-6-2v4z" stroke="#1f2f66" fill="none" />
                <text x="2" y="10" fontSize="9" fill="#1f2f66">Y</text>
                <text x="43" y="51" fontSize="9" fill="#1f2f66">X</text>
              </Ucs>
              {children}
            </Canvas>
            <VScroll>
              <ScrollButton aria-label="W górę"><Chevron dir="up" /></ScrollButton>
              <ScrollButton aria-label="Suwak pionowy" />
              <ScrollButton aria-label="W dół"><Chevron /></ScrollButton>
            </VScroll>
          </DrawRow>
          <LayoutRow>
            <LayoutTabs>
              {navs.map(([name, d]) => (
                <NavButton key={name} aria-label={name}><svg width="7" height="7" viewBox="0 0 7 7"><path d={d} stroke="#111" fill="#111" strokeWidth=".6" /></svg></NavButton>
              ))}
              <Slash width="4" height="9" viewBox="0 0 4 9"><path d="M0 0l4 9" stroke="#222" /></Slash>
              {['Model', 'Arkusz1', 'Arkusz2'].map(t => [
                <LayoutTab key={t} $active={t === 'Model'}>{t}</LayoutTab>,
                <Slash key={t + 's'} width="4" height="9" viewBox="0 0 4 9"><path d="M4 0L0 9" stroke="#222" /></Slash>
              ])}
            </LayoutTabs>
            <HScroll $width={215} $inset={10}>
              <ScrollPair>
                <ScrollButton aria-label="W lewo"><Chevron dir="left" /></ScrollButton>
                <ScrollButton aria-label="Suwak poziomy" />
              </ScrollPair>
              <ScrollButton aria-label="W prawo"><Chevron dir="right" /></ScrollButton>
            </HScroll>
          </LayoutRow>
        </DrawColumn>
        <SideBar>
          <Side height={219} names="line xline pline polygon rect arc circle cloud spline ellipse earc block mkblock point hatch region table mtext" />
        </SideBar>
        <SideBar>
          <Side height={196} names="erase copyobj mirror offset array move rotate scale stretch trim extend break1 break2 chamfer fillet explode" />
          <Side height={56} names="front back above under" />
        </SideBar>
      </Workspace>

      <CommandPanel>
        <CommandGrip />
        <CommandBox>
          <History>
            <HistoryText>{history}</HistoryText>
            <div>
              <ScrollButton $short aria-label="Historia w górę"><Chevron dir="up" /></ScrollButton>
              <ScrollButton $short aria-label="Historia w dół"><Chevron /></ScrollButton>
            </div>
          </History>
          <Prompt>
            <PromptInput aria-label="Polecenie" />
            <HScroll $width={35} $inset={10}>
              <ScrollPair>
                <ScrollButton aria-label="Przewiń w lewo"><Chevron dir="left" /></ScrollButton>
                <ScrollButton aria-label="Suwak polecenia" />
              </ScrollPair>
              <ScrollButton aria-label="Przewiń w prawo"><Chevron dir="right" /></ScrollButton>
            </HScroll>
          </Prompt>
        </CommandBox>
      </CommandPanel>
      <StatusBar>
        <Coords>{coords}</Coords>
        {toggles.map((t, i) => <StatusButton key={t} $on={i > 4} aria-pressed={i > 4}>{t}</StatusButton>)}
        <Spacer />
        <Tray>
          <Icon name="tray" size={11} />
          <svg width="5" height="4" viewBox="0 0 5 4" aria-hidden="true"><path d="M0 0h5L2.500 3z" fill="#111" /></svg>
          <svg width="8" height="8" viewBox="0 0 8 8" aria-hidden="true"><path d="M6 1v1M6 3.500v1M6 6v1M3.500 3.500v1M3.500 6v1M1 6v1" stroke="#a9a692" /></svg>
        </Tray>
      </StatusBar>
    </AppWindow>
  )
}

const Rule = styled.hr`
  height: 1px;
  margin: 0;
  border: 0;
  background: #111;
`

export default function App() {
  return (
    <>
      <GlobalStyle />
      <Page>
        <CadWindow cap={2} after={116} layer="A1" color="#e01c10" coords="136.3968, 202.6535, 0.0000" history={'Polecenie:\nPolecenie:'}>
          <HatchDialog active="Zaawansowane" top={-1} right={2} />
        </CadWindow>
        <CadWindow cap={4} after={136} layer="KRESKOWANIE" color="#f4ec1c" coords="113.9137, 189.0811, 0.0000" history={'Analiza wewnętrznych wysp...\nWybierz punkt wewnętrzny:'} filled>
          <HatchDialog active="Gradient" top={5} right={6} />
        </CadWindow>
        <Rule />
      </Page>
    </>
  )
}
